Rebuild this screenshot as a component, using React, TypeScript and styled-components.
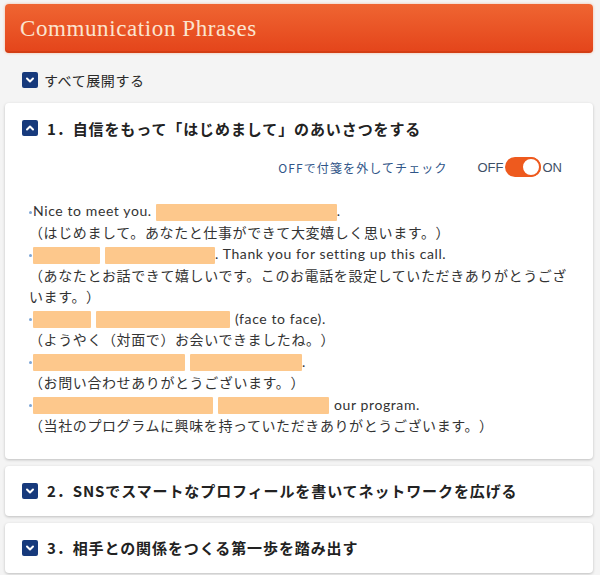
import React from "react";
import styled, { createGlobalStyle } from "styled-components";

const Global = createGlobalStyle`
  html, body { margin: 0; padding: 0; background: #f4f4f4; }
  body {
    font-family: "Noto Sans CJK JP", "Noto Sans", sans-serif;
    color: #333;
    text-spacing-trim: space-all;
  }
`;

const Page = styled.div`
  padding: 4px 7px 0 5px;
`;

const Header = styled.h1`
  margin: 0;
  height: 49px;
  display: flex;
  align-items: center;
  padding-left: 15px;
  border-radius: 4px;
  background: linear-gradient(#ef6532, #e4441a);
  box-shadow: 0 0 3px rgba(240, 120, 60, 0.45), inset 0 -2px 0 rgba(180, 50, 10, 0.35);
  font-family: "Liberation Serif", "DejaVu Serif", serif;
  font-weight: 400;
  font-size: 23px;
  letter-spacing: 0.6px;
  color: #fbe4cf;
`;

const ExpandRow = styled.div`
  margin: 16px 0 12px 17px;
  height: 22px;
  display: flex;
  align-items: center;
  gap: 6px;
  font-size: 14px;
  letter-spacing: 0.6px;
  color: #2a2a2a;
`;

const Box = styled.span`
  width: 16px;
  height: 16px;
  border-radius: 2px;
  background: #173a7c;
  display: inline-flex;
  align-items: center;
  justify-content: center;
  flex: none;
`;

const Chevron = ({ up }: { up?: boolean }) => (
  <Box>
    <svg width="10" height="10" viewBox="0 0 10 10">
      <path
        d={up ? "M2 6.5 L5 3.5 L8 6.5" : "M2 3.5 L5 6.5 L8 3.5"}
        fill="none"
        stroke="#fff"
        strokeWidth="2"
        strokeLinecap="round"
        strokeLinejoin="round"
      />
    </svg>
  </Box>
);

const Card = styled.section<{ $open?: boolean }>`
  background: #fff;
  border-radius: 4px;
  box-shadow: 0 1px 3px rgba(0, 0, 0, 0.22);
  margin-bottom: 7px;
  padding: 0 21px ${(p) => (p.$open ? "22px" : "0")} 17px;
`;

const Title = styled.h2`
  margin: 0;
  height: 50px;
  display: flex;
  align-items: center;
  gap: 9px;
  font-size: 15px;
  font-weight: 700;
  color: #222;
  letter-spacing: 0.9px;
`;

const ToggleRow = styled.div`
  margin-top: 3px;
  height: 22px;
  display: flex;
  align-items: center;
  justify-content: flex-end;
  padding-right: 10px;
  font-size: 12px;
`;

const Hint = styled.span`
  color: #2f5588;
  letter-spacing: 1.1px;
  margin-right: 30px;
`;

const SwLabel = styled.span`
  font-family: "Liberation Sans", Arial, sans-serif;
  font-size: 13px;
  color: #3e4f66;
`;

const Pill = styled.span`
  position: relative;
  width: 36px;
  height: 20px;
  border-radius: 10px;
  background: #ee5a1e;
  margin: 0 2px 0 1px;
`;

const Knob = styled.span`
  position: absolute;
  right: 0;
  top: 0;
  width: 16px;
  height: 16px;
  border-radius: 50%;
  background: #fff;
  border: 2px solid #ee5a1e;
`;

const Content = styled.div`
  margin-top: 22px;
  padding-left: 7px;
  font-family: "Lato", "Noto Sans CJK JP", sans-serif;
  font-size: 14px;
  line-height: 21.5px;
  letter-spacing: 0.6px;
  color: #333;
`;

const Line = styled.div``;

const Ja = styled.span`
  font-family: "Noto Sans CJK JP", sans-serif;
`;

const Dot = styled.span`
  display: inline-block;
  width: 3px;
  height: 3px;
  border-radius: 50%;
  background: #7ea6d6;
  vertical-align: middle;
  margin-right: 1px;
`;

const Blank = styled.span<{ $w: number; $last?: boolean }>`
  display: inline-block;
  width: ${(p) => p.$w}px;
  height: 17px;
  background: #fdc88c;
  vertical-align: middle;
  margin-right: ${(p) => (p.$last ? "0" : "5px")};
  border-radius: 1px;
`;

const Gap = styled.span`
  display: inline-block;
  width: 4px;
`;

export default function App() {
  return (
    <>
      <Global />
      <Page>
        <Header>Communication Phrases</Header>
        <ExpandRow>
          <Chevron />
          すべて展開する
        </ExpandRow>

        <Card $open>
          <Title>
            <Chevron up />
            1．自信をもって「はじめまして」のあいさつをする
          </Title>
          <ToggleRow>
            <Hint>OFFで付箋を外してチェック</Hint>
            <SwLabel>OFF</SwLabel>
            <Pill>
              <Knob />
            </Pill>
            <SwLabel>ON</SwLabel>
          </ToggleRow>
          <Content>
            <Line>
              <Dot />
              Nice to meet you.<Gap />
              <Blank $w={181} $last />.
            </Line>
            <Line>
              <Ja>（はじめまして。あなたと仕事ができて大変嬉しく思います。）</Ja>
            </Line>
            <Line>
              <Dot />
              <Blank $w={67} />
              <Blank $w={110} $last />. Thank you for setting up this call.
            </Line>
            <Line>
              <Ja>
                （あなたとお話できて嬉しいです。このお電話を設定していただきありがとうございます。）
              </Ja>
            </Line>
            <Line>
              <Dot />
              <Blank $w={58} />
              <Blank $w={134} />
              (face to face).
            </Line>
            <Line>
              <Ja>（ようやく（対面で）お会いできましたね。）</Ja>
            </Line>
            <Line>
              <Dot />
              <Blank $w={152} />
              <Blank $w={112} $last />.
            </Line>
            <Line>
              <Ja>（お問い合わせありがとうございます。）</Ja>
            </Line>
            <Line>
              <Dot />
              <Blank $w={180} />
              <Blank $w={111} />
              our program.
            </Line>
            <Line>
              <Ja>（当社のプログラムに興味を持っていただきありがとうございます。）</Ja>
            </Line>
          </Content>
        </Card>

        <Card>
          <Title>
            <Chevron />
            2．SNSでスマートなプロフィールを書いてネットワークを広げる
          </Title>
        </Card>

        <Card>
          <Title>
            <Chevron />
            3．相手との関係をつくる第一歩を踏み出す
          </Title>
        </Card>
      </Page>
    </>
  );
}
